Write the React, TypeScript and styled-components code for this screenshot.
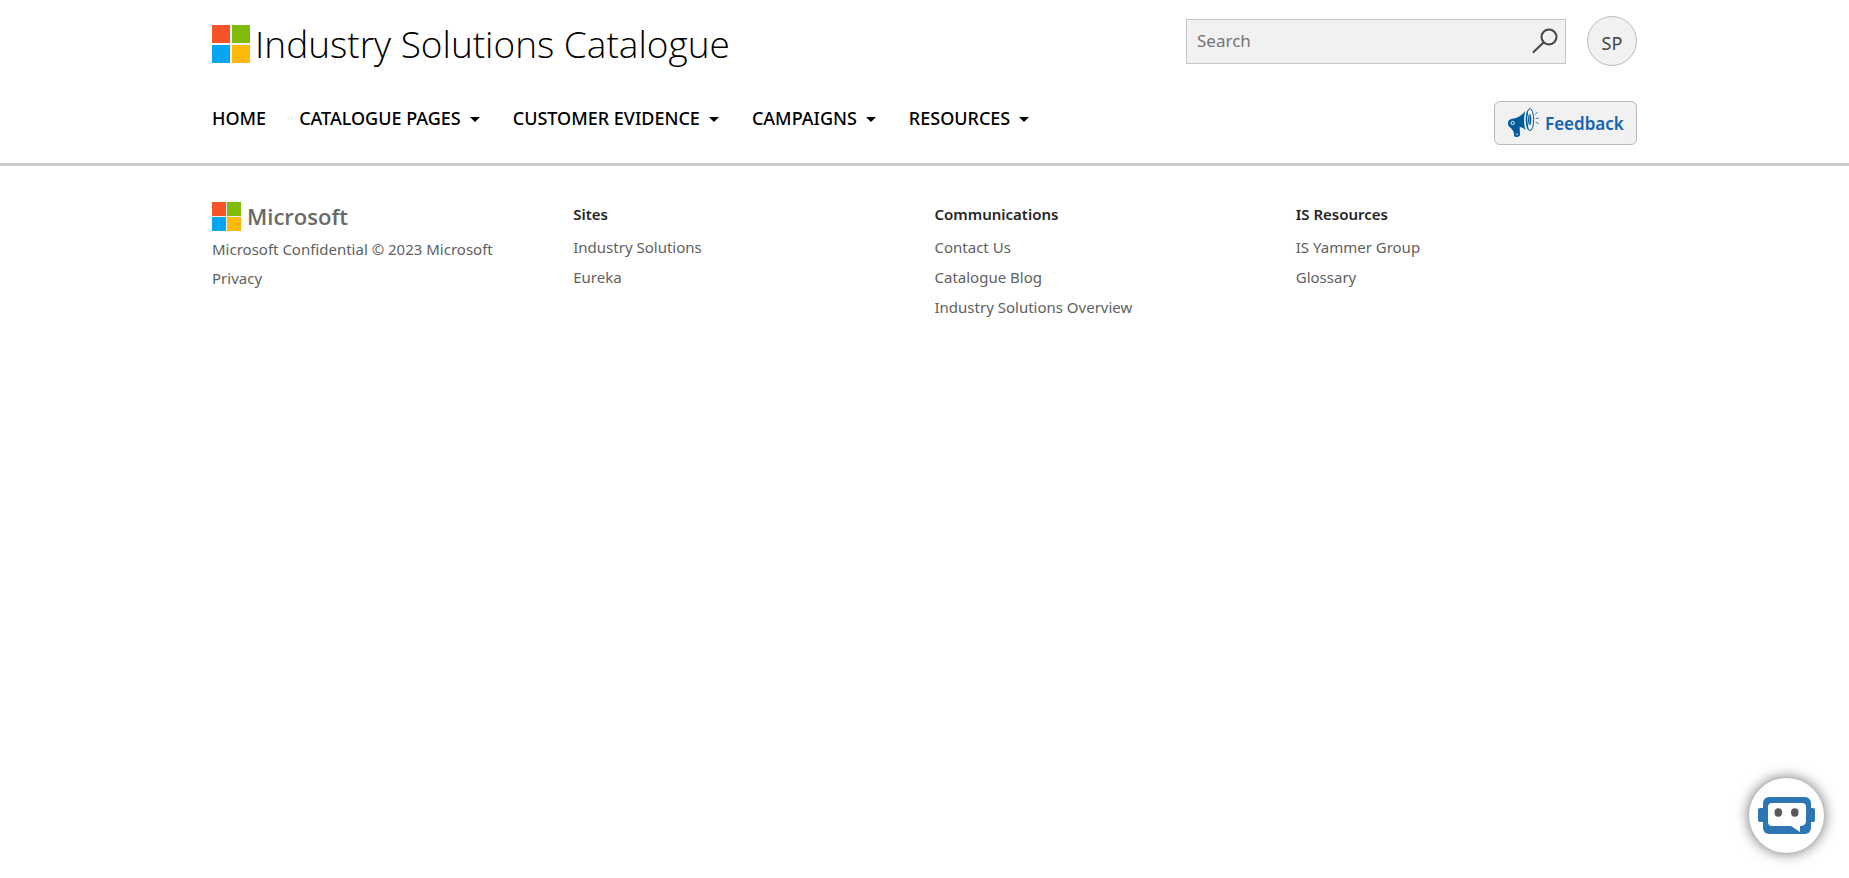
import React from "react";
import styled, { createGlobalStyle } from "styled-components";

const GlobalStyle = createGlobalStyle`
  *, *::before, *::after { box-sizing: border-box; }
  body {
    margin: 0;
    background: #fff;
    color: #000;
    font-family: "Segoe UI", "Noto Sans", "Open Sans", sans-serif;
    font-size: 15px;
  }
  a { color: inherit; text-decoration: none; }
  button, input { font: inherit; color: inherit; }
`;

const Container = styled.div`
  max-width: 1445px;
  margin: 0 auto;
  padding: 0 10px;
`;

const Header = styled.header`
  border-bottom: 3px solid #ccc;
`;

const TopBar = styled.div`
  display: flex;
  justify-content: space-between;
  padding-top: 16px;
`;

const Brand = styled.a`
  display: flex;
  align-items: center;
  gap: 5px;
  height: 56px;
`;

const BrandTitle = styled.h1`
  margin: 0;
  font-family: "Segoe UI", "Open Sans", sans-serif;
  font-size: 37px;
  font-weight: 300;
  line-height: 56px;
  white-space: nowrap;
`;

const Tools = styled.div`
  display: flex;
  align-items: center;
  gap: 21px;
  height: 50px;
`;

const SearchBox = styled.form`
  display: flex;
  align-items: center;
  width: 380px;
  height: 45px;
  padding: 0 7px 0 10px;
  border: 1px solid #c6c6c6;
  background: #f1f1f1;
`;

const SearchInput = styled.input`
  flex: 1;
  min-width: 0;
  padding: 0;
  border: 0;
  outline: 0;
  background: transparent;
  font-size: 17px;
  line-height: 24px;
  &::placeholder { color: #757575; opacity: 1; }
`;

const IconButton = styled.button`
  display: flex;
  padding: 0;
  border: 0;
  background: none;
  cursor: pointer;
`;

const Avatar = styled.button`
  width: 50px;
  height: 50px;
  padding: 3px 0 0;
  border: 1px solid #bbb;
  border-radius: 50%;
  background: #f1f1f1;
  color: #444;
  font-size: 18px;
  cursor: pointer;
`;

const NavBar = styled.div`
  display: flex;
  justify-content: space-between;
  align-items: flex-start;
  padding: 29px 0 18px;
`;

const NavList = styled.ul`
  display: flex;
  gap: 33px;
  margin: 0;
  padding: 0;
  list-style: none;
`;

const NavLink = styled.a`
  display: flex;
  align-items: center;
  gap: 9px;
  font-size: 18px;
  font-weight: 500;
  line-height: 34px;
  white-space: nowrap;
`;

const Caret = styled.span`
  margin-top: 2px;
  border-top: 5px solid #000;
  border-left: 5px solid transparent;
  border-right: 5px solid transparent;
`;

const FeedbackButton = styled.button`
  display: flex;
  align-items: center;
  gap: 5px;
  width: 143px;
  height: 44px;
  padding: 0 0 0 13px;
  border: 1px solid #bbb;
  border-radius: 6px;
  background: #f1f1f1;
  color: #1264b4;
  font-size: 17px;
  font-weight: 600;
  cursor: pointer;
`;

const FooterGrid = styled.div`
  display: grid;
  grid-template-columns: repeat(4, 1fr);
  column-gap: 20px;
  padding-top: 33px;
  color: #616161;
`;

const CompanyColumn = styled.section`
  padding-top: 3px;
`;

const Company = styled.div`
  display: flex;
  align-items: center;
  gap: 6px;
  height: 29px;
  margin-bottom: 4px;
  font-family: "Segoe UI", "Open Sans", sans-serif;
  font-size: 22px;
  font-weight: 600;
  line-height: 29px;
  color: #696969;
`;

const CompanyLine = styled.p`
  margin: 0;
  line-height: 29px;
`;

const ColumnTitle = styled.h2`
  margin: 0;
  font-size: 15px;
  font-weight: 600;
  line-height: 30px;
  color: #262626;
`;

const LinkList = styled.ul`
  margin: 0;
  padding: 3px 0 0;
  list-style: none;
  line-height: 30px;
`;

const ChatButton = styled.button`
  position: fixed;
  right: 25px;
  bottom: 25px;
  display: flex;
  align-items: center;
  justify-content: center;
  width: 75px;
  height: 75px;
  padding: 0;
  border: 0;
  border-radius: 50%;
  background: #fff;
  box-shadow: 0 0 14px rgba(0, 0, 0, 0.6);
  cursor: pointer;
`;

const Squares = ({ size, tile }: { size: number; tile: number }) => {
  const far = size - tile;
  return (
    <svg width={size} height={size} aria-hidden="true" shapeRendering="crispEdges">
      <rect width={size} height={size} fill="#f3f3f3" />
      <rect width={tile} height={tile} fill="#f65426" />
      <rect x={far} width={tile} height={tile} fill="#80bb0a" />
      <rect y={far} width={tile} height={tile} fill="#05a5f1" />
      <rect x={far} y={far} width={tile} height={tile} fill="#ffb90a" />
    </svg>
  );
};

const SearchIcon = () => (
  <svg width="26" height="26" viewBox="0 0 26 26" fill="none" stroke="#444" strokeWidth="2" aria-hidden="true">
    <circle cx="17" cy="9" r="7.5" />
    <path d="M11.500 14.500 1.500 24" strokeLinecap="round" />
  </svg>
);

const Megaphone = () => (
  <svg width="32" height="30" viewBox="84 56 96 90" aria-hidden="true">
    <path
      d="M84 101c0-9 6-12 13-13 16-2 29-10 39-24-5 18-5 42 1 58-6-5-12-8-18-9l1 24c0 5-14 9-17 4-2-6 0-12-4-17-2-3-5-6-7-9-5-2-8-7-8-14z"
      fill="#005b9a"
    />
    <circle cx="98" cy="101" r="5" fill="#005b9a" stroke="#f1f1f1" strokeWidth="3" />
    <circle cx="111" cy="135" r="2.500" fill="#f1f1f1" />
    <ellipse cx="150" cy="91" rx="11" ry="33" fill="#f1f1f1" stroke="#005b9a" strokeWidth="3" />
    <path d="M143 62c3 8-2 16-1 29 0 13 5 22 2 30-8-12-9-46-1-59z" fill="#005b9a" />
    <ellipse cx="149" cy="91" rx="5" ry="16" fill="#005b9a" />
    <path d="M148 77v28" stroke="#f1f1f1" strokeWidth="1.500" />
    <path d="m165 76 8-8M167 88l10-2M167 98l9 5" stroke="#3a7fb0" strokeWidth="3" />
  </svg>
);

const BotIcon = () => (
  <svg width="57" height="37" viewBox="0 0 57 37" aria-hidden="true">
    <rect y="11" width="57" height="14" rx="2" fill="#2e75b6" />
    <rect x="5" width="48" height="37" rx="6" fill="#2e75b6" />
    <path d="M14 6h30q4 0 4 4v14q0 5-6 5v6l-9-6H14q-4 0-4-4V10q0-4 4-4z" fill="#fff" />
    <ellipse cx="20.300" cy="15.500" rx="3.800" ry="4.200" fill="#595959" />
    <ellipse cx="36.800" cy="15.500" rx="3.800" ry="4.200" fill="#595959" />
  </svg>
);

const navItems = [
  { label: "HOME", menu: false },
  { label: "CATALOGUE PAGES", menu: true },
  { label: "CUSTOMER EVIDENCE", menu: true },
  { label: "CAMPAIGNS", menu: true },
  { label: "RESOURCES", menu: true },
];

const columns = [
  { title: "Sites", links: ["Industry Solutions", "Eureka"] },
  { title: "Communications", links: ["Contact Us", "Catalogue Blog", "Industry Solutions Overview"] },
  { title: "IS Resources", links: ["IS Yammer Group", "Glossary"] },
];

export default function App() {
  return (
    <>
      <GlobalStyle />
      <Header>
        <Container>
          <TopBar>
            <Brand href="#">
              <Squares size={38} tile={18} />
              <BrandTitle>Industry Solutions Catalogue</BrandTitle>
            </Brand>
            <Tools>
              <SearchBox role="search" onSubmit={(e) => e.preventDefault()}>
                <SearchInput type="text" placeholder="Search" aria-label="Search" />
                <IconButton type="submit" aria-label="Submit search">
                  <SearchIcon />
                </IconButton>
              </SearchBox>
              <Avatar type="button">SP</Avatar>
            </Tools>
          </TopBar>
          <NavBar>
            <nav>
              <NavList>
                {navItems.map((item) => (
                  <li key={item.label}>
                    <NavLink href="#">
                      {item.label}
                      {item.menu && <Caret />}
                    </NavLink>
                  </li>
                ))}
              </NavList>
            </nav>
            <FeedbackButton type="button">
              <Megaphone />
              Feedback
            </FeedbackButton>
          </NavBar>
        </Container>
      </Header>
      <footer>
        <Container>
          <FooterGrid>
            <CompanyColumn>
              <Company>
                <Squares size={29} tile={14} />
                Microsoft
              </Company>
              <CompanyLine>Microsoft Confidential © 2023 Microsoft</CompanyLine>
              <CompanyLine>
                <a href="#">Privacy</a>
              </CompanyLine>
            </CompanyColumn>
            {columns.map((column) => (
              <section key={column.title}>
                <ColumnTitle>{column.title}</ColumnTitle>
                <LinkList>
                  {column.links.map((link) => (
                    <li key={link}>
                      <a href="#">{link}</a>
                    </li>
                  ))}
                </LinkList>
              </section>
            ))}
          </FooterGrid>
        </Container>
      </footer>
      <ChatButton type="button" aria-label="Open chat">
        <BotIcon />
      </ChatButton>
    </>
  );
}
